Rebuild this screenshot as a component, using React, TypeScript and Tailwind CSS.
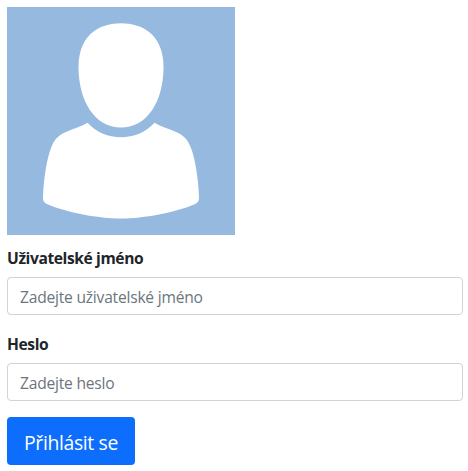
import React from "react";

function Avatar() {
  return (
    <svg className="block size-[228px] bg-[#95b9df]" viewBox="7 7 228 228" fill="#fff" aria-hidden="true">
      <path d="M121 23.3C147 23.3 163.5 39 163.5 67C163.5 100 148 127.6 121 127.6C94 127.6 78.5 100 78.5 67C78.5 39 95 23.3 121 23.3Z" />
      <path d="M87.5 122.7C97 132.5 108 137.2 121 137.2C134 137.2 145 132.5 154.5 122.7C161 126.5 169.5 129 176 132C184 135.5 188 140 191 148C195.5 160 198.5 180 199 197.5C199.1 201.5 197.5 203 194 204.5C175 212.5 144 218.5 121 218.5C98 218.5 67 212.5 48 204.5C44.5 203 42.9 201.5 43 197.5C43.5 180 46.5 160 51 148C54 140 58 135.5 66 132C72.5 129 81 126.5 87.5 122.7Z" />
    </svg>
  );
}

type FieldProps = {
  id: string;
  label: string;
  placeholder: string;
  type: string;
};

function Field({ id, label, placeholder, type }: FieldProps) {
  return (
    <div className="mb-4">
      <label htmlFor={id} className="mb-2 block h-6 text-[15.6px] leading-[26px] font-bold tracking-[-0.4px] text-[#212529]">
        {label}
      </label>
      <input
        id={id}
        type={type}
        placeholder={placeholder}
        className="block h-[38px] w-full rounded border border-[#ced4da] bg-white px-3 pt-[7px] pb-[5px] text-[15.6px] leading-6 tracking-[-0.22px] placeholder:text-[#6c757d]"
      />
    </div>
  );
}

export default function App() {
  return (
    <main className="h-[471px] bg-white pt-[7px] pr-[5px] pl-[7px] font-['Open_Sans','Noto_Sans',sans-serif]">
      <Avatar />
      <form className="pt-2.5" onSubmit={(e) => e.preventDefault()}>
        <Field id="username" type="text" label="Uživatelské jméno" placeholder="Zadejte uživatelské jméno" />
        <Field id="password" type="password" label="Heslo" placeholder="Zadejte heslo" />
        <button
          type="submit"
          className="flex h-12 w-32 items-center justify-center rounded bg-[#0d6efd] pt-[3px] text-[19.4px] leading-[30px] tracking-[-0.36px] whitespace-nowrap text-white"
        >
          Přihlásit se
        </button>
      </form>
    </main>
  );
}
